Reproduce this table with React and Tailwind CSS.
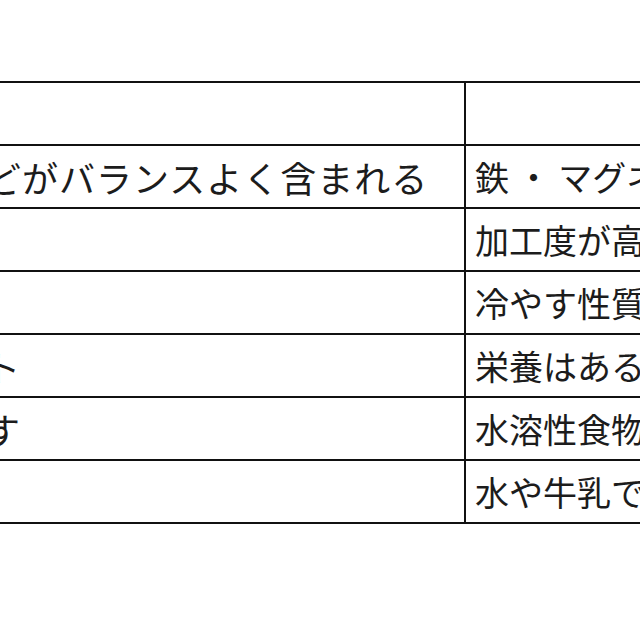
const rows = [
  ["ビタミン・ミネラル・食物繊維などがバランスよく含まれる", "鉄 ・ マグネシウムが不足しがち"],
  ["精製されていない自然な食品", "加工度が高い"],
  ["体を温める性質がある", "冷やす性質がある"],
  ["手軽に栄養補給できるのがメリット", "栄養はあるが吸収されにくい"],
  ["腸内の環境を整える働きがあります", "水溶性食物繊維が少ない"],
  ["そのまま食べられる", "水や牛乳で割る必要がある"],
];

export default function App() {
  return (
    <div
      className="w-[640px] h-[640px] overflow-hidden bg-white pt-[81px] text-[#1c1c1c]"
      style={{ fontFamily: '"Noto Sans CJK JP", "Noto Sans", sans-serif' }}
    >
      <div className="ml-[-582px] flex w-[1750px] flex-col border-t-2 border-l-2 border-[#111]">
        {/* header */}
        <div className="flex h-[63px] border-b-2 border-[#111]">
          <div className="flex w-[1046px] shrink-0 items-center justify-center border-r-2 border-[#111] text-[36px]">
            長所
          </div>
          <div className="flex w-[700px] shrink-0 items-center justify-center text-[34px]">
            短所
          </div>
        </div>

        {rows.map(([good, bad], i) => (
          <div key={i} className="flex h-[63px] border-b-2 border-[#111]">
            <div className="flex w-[1046px] shrink-0 items-center whitespace-nowrap border-r-2 border-[#111] pl-[10px] text-[36px] tracking-[1px]">
              {good}
            </div>
            <div className="flex w-[700px] shrink-0 items-center whitespace-nowrap pl-[9px] text-[34px]">
              {bad}
            </div>
          </div>
        ))}
      </div>
    </div>
  );
}
